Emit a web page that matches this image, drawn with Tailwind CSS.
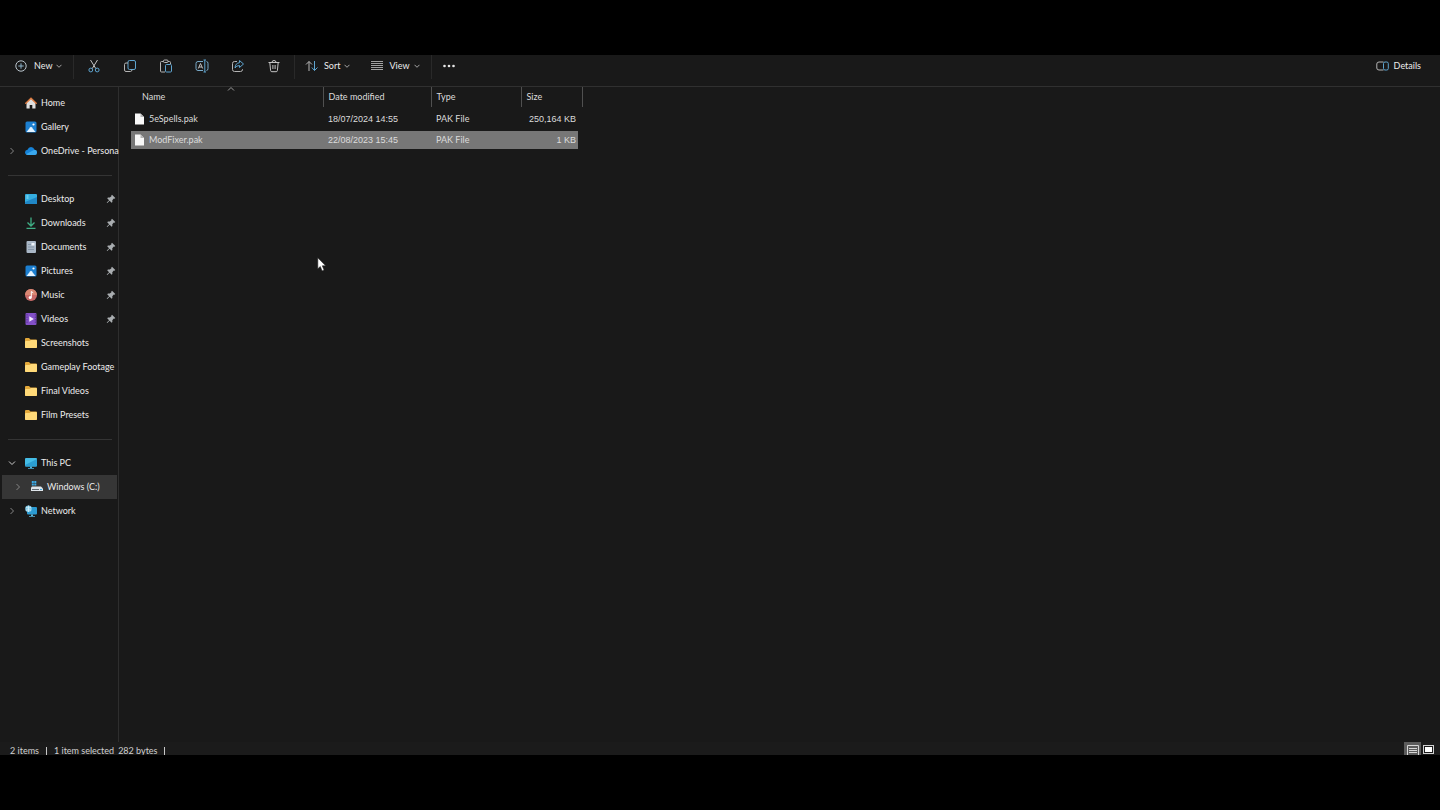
<!DOCTYPE html>
<html lang="en">
<head>
<meta charset="utf-8">
<meta name="viewport" content="width=device-width, initial-scale=1">
<title>File Explorer</title>
<script src="https://cdn.jsdelivr.net/npm/@tailwindcss/browser@4"></script>
</head>
<body class="relative flex h-screen flex-col overflow-hidden bg-black py-[55px] font-[Lato,'Open_Sans',sans-serif] text-[9px] leading-3 text-[#ececec]">

<svg class="hidden">
  <symbol id="down" viewBox="0 0 6 6"><path d="M.5 1.800l2.500 2.500 2.500-2.500" fill="none" stroke="#a5a5a5"/></symbol>
  <symbol id="right" viewBox="0 0 6 8"><path d="M1.500 1l3 3-3 3" fill="none" stroke="#858585"/></symbol>
  <symbol id="pin" viewBox="0 0 10 10"><path d="M6 .8L9.300 4l-.8.700-.7-.1-1.500 1.600.1 1.700-.8.800-2-2L1.300 9l-.6-.5 2.400-2.300-1.900-1.900.8-.8 1.800.1L5.400 2.200l-.1-.7z" fill="#a9adb0"/></symbol>
  <symbol id="folder" viewBox="0 0 12 10"><path d="M0 1q0-1 1-1h3l1.500 1.500H11q1 0 1 1V9q0 1-1 1H1q-1 0-1-1z" fill="#e3a83a"/><path d="M0 4q0-1 1-1h3.500L6 2h5q1 0 1 1v6q0 1-1 1H1q-1 0-1-1z" fill="#ffd978"/></symbol>
  <symbol id="picture" viewBox="0 0 12 12"><rect x=".5" y=".5" width="11" height="11" rx="1.500" fill="#1c7fd0"/><path d="M1.500 11l3.800-4.800q.7-.7 1.400 0l3.800 4.800z" fill="#e2f3ff"/><circle cx="8.500" cy="3.500" r="1.100" fill="#fff"/></symbol>
  <symbol id="file" viewBox="0 0 9 12"><path d="M0 .5h5.500L9 4v7.500H0z" fill="#f8f8f8"/><path d="M5.500.5V4H9z" fill="#b5b5b5"/></symbol>
</svg>

<div class="flex min-h-0 flex-1 flex-col overflow-hidden bg-[#191919]">
  <header class="flex shrink-0 items-start justify-between border-b border-[#303030] pr-[19px] pl-[15px]">
    <div class="flex h-[31px] items-start" role="toolbar" aria-label="Commands">
      <button class="flex h-[22px] w-[58px] items-center">
        <svg class="size-3" viewBox="0 0 12 12" fill="none"><circle cx="6" cy="6" r="5.200" stroke="#b9c4cc"/><path d="M6 3.300v5.400M3.300 6h5.400" stroke="#8fb5cc"/></svg>
        <span class="ml-[7px]">New</span><svg class="ml-[3px] size-1.5"><use href="#down"/></svg>
      </button>
      <span class="h-6 w-px bg-[#292929]"></span>
      <button aria-label="Cut" class="ml-[13px] flex h-[22px] w-3.5 items-center justify-center"><svg class="size-3.5" viewBox="0 0 14 14" fill="none"><path d="M3.500 1l5.300 8.600M10.500 1L5.200 9.600" stroke="#c4c4c4"/><circle cx="3.800" cy="11" r="1.900" stroke="#5ea4cf"/><circle cx="10.200" cy="11" r="1.900" stroke="#5ea4cf"/></svg></button>
      <button aria-label="Copy" class="ml-[22px] flex h-[22px] w-3.5 items-center justify-center"><svg class="size-3.5" viewBox="0 0 14 14" fill="none"><rect x="5" y="1.500" width="7.500" height="9" rx="1.500" stroke="#5ea4cf"/><path d="M5 4H3Q1.500 4 1.500 5.500v5.500q0 1.500 1.500 1.500h4.500q1.500 0 1.500-2" stroke="#b4b4b4"/></svg></button>
      <button aria-label="Paste" class="ml-[22px] flex h-[22px] w-3.5 items-center justify-center"><svg class="size-3.5" viewBox="0 0 14 14" fill="none"><path d="M4.500 2.500H2.500q-1 0-1 1v8.500q0 1 1 1H6M9 2.500h1.500q1 0 1 1V5" stroke="#b4b4b4"/><rect x="4.500" y="1" width="4.500" height="2.500" rx="1" stroke="#b4b4b4"/><rect x="6.500" y="5.500" width="6" height="7.500" rx="1" stroke="#5ea4cf"/></svg></button>
      <button aria-label="Rename" class="ml-[22px] flex h-[22px] w-3.5 items-center justify-center"><svg class="size-3.5" viewBox="0 0 14 14" fill="none"><path d="M8 2.500H3Q1 2.500 1 4.500v5q0 2 2 2h5M11.500 2.500q1.500 0 1.500 2v5q0 2-1.500 2" stroke="#78a9c8"/><path d="M3.300 9.500L5.500 4.500l2.200 5M4 8h3" stroke="#c0c0c0"/><path d="M9.800 1v12M8.500 1H11M8.500 13H11" stroke="#5ea4cf"/></svg></button>
      <button aria-label="Share" class="ml-[22px] flex h-[22px] w-3.5 items-center justify-center"><svg class="size-3.5" viewBox="0 0 14 14" fill="none"><path d="M6 2.500H3.500q-2 0-2 2v6q0 2 2 2h6q2 0 2-2V10" stroke="#b4b4b4"/><path d="M8.500 1.500l4 3.500-4 3.500V6.500Q5.500 6.500 4 9q.3-4.800 4.500-5.300z" stroke="#5ea4cf" stroke-linejoin="round"/></svg></button>
      <button aria-label="Delete" class="ml-[22px] flex h-[22px] w-3.5 items-center justify-center"><svg class="size-3.5" viewBox="0 0 14 14" fill="none" stroke="#c4c4c4"><path d="M1.500 3.500h11M5 3.300Q5 1.500 7 1.500t2 1.800M2.800 3.500l.8 8q.1 1.200 1.200 1.200h4.400q1.100 0 1.200-1.200l.8-8M5.900 6v4M8.100 6v4"/></svg></button>
      <span class="ml-[13px] h-6 w-px bg-[#292929]"></span>
      <button class="ml-[10px] flex h-[22px] items-center">
        <svg class="h-3 w-3.5" viewBox="0 0 14 12" fill="none"><path d="M4 11V1.500M1 4.500l3-3 3 3" stroke="#b8b8b8"/><path d="M9.500 1v9.500M6.800 7.500l2.700 3 3-3" stroke="#5ea4cf"/></svg>
        <span class="ml-[5px]">Sort</span><svg class="ml-1 size-1.5"><use href="#down"/></svg>
      </button>
      <button class="ml-[21px] flex h-[22px] items-center">
        <svg class="h-3 w-3" viewBox="0 0 12 12"><path d="M0 1.500h12M0 3.500h12M0 5.500h12M0 7.500h12M0 9.500h12" stroke="#a2a2a2"/></svg>
        <span class="ml-[6px]">View</span><svg class="ml-1 size-1.5"><use href="#down"/></svg>
      </button>
      <span class="ml-[11px] h-6 w-px bg-[#292929]"></span>
      <button aria-label="See more" class="ml-[11px] flex h-[22px] items-center"><svg class="h-1 w-3" viewBox="0 0 12 4" fill="#e8e8e8"><circle cx="1.500" cy="2" r="1.300"/><circle cx="6" cy="2" r="1.300"/><circle cx="10.500" cy="2" r="1.300"/></svg></button>
    </div>
    <button class="flex h-[22px] items-center gap-[5px]"><svg class="h-3 w-[13px]" viewBox="0 0 13 12" fill="none"><path d="M7.500 2H3Q.8 2 .8 4v4q0 2 2.200 2h4.500" stroke="#b4b4b4"/><rect x="7.500" y="2" width="4.800" height="8" rx="1.500" stroke="#5ea4cf"/></svg><span>Details</span></button>
  </header>

  <div class="flex min-h-0 flex-1">
    <nav aria-label="Folders" class="w-[119px] shrink-0 border-r border-[#2e2e2e] pt-1 whitespace-nowrap">
      <ul>
        <li><a href="#home" class="flex h-6 items-center pl-[25px]"><svg class="size-3 shrink-0" viewBox="0 0 12 12"><path d="M1.500 5.500L6 1.500l4.500 4V11.500H7.300V8H4.700v3.500H1.500z" fill="#dfdfdf"/><path d="M.8 6.200L6 1.300l5.200 4.900" fill="none" stroke="#dc7a3f" stroke-width="1.500" stroke-linecap="round"/></svg><span class="ml-1">Home</span></a></li>
        <li><a href="#gallery" class="flex h-6 items-center pl-[25px]"><svg class="size-3 shrink-0"><use href="#picture"/></svg><span class="ml-1">Gallery</span></a></li>
        <li><a href="#onedrive" class="flex h-6 items-center pl-[9px]"><svg class="h-2 w-1.5 shrink-0"><use href="#right"/></svg><svg class="ml-[10px] size-3 shrink-0" viewBox="0 0 12 12"><path d="M3 10q-3-.2-3-2.700Q.1 5 2.500 4.700 3.500 2 6 2q2.700 0 3.500 2.700Q12 5 12 7.500 11.900 10 9.500 10z" fill="#1683d8"/><path d="M1 9.300l5-2.800 3.500-1.800Q12 5 12 7.500 11.900 10 9.500 10H3q-1.200 0-2-.7z" fill="#3aa8ee"/></svg><span class="ml-1">OneDrive - Persona</span></a></li>
      </ul>
      <div class="flex h-6 items-center pr-[6px] pl-2"><hr class="w-full border-[#343434]"></div>
      <ul>
        <li><a href="#desktop" class="flex h-6 items-center pr-[2px] pl-[25px]"><svg class="size-3 shrink-0" viewBox="0 0 12 12"><rect y="1" width="12" height="10" rx="1" fill="#35aee0"/><path d="M0 9L12 4v6q0 1-1 1H1q-1 0-1-1z" fill="#2087c6"/><path d="M1.500 3h2M1.500 5h2" stroke="#9ae8f8"/></svg><span class="ml-1 flex-1">Desktop</span><svg class="size-2.5 shrink-0"><use href="#pin"/></svg></a></li>
        <li><a href="#downloads" class="flex h-6 items-center pr-[2px] pl-[25px]"><svg class="size-3 shrink-0" viewBox="0 0 12 12" fill="none" stroke="#3fae85" stroke-width="1.300"><path d="M6 .5v8M2.500 5.500L6 9l3.500-3.500M1.500 11.300h9"/></svg><span class="ml-1 flex-1">Downloads</span><svg class="size-2.5 shrink-0"><use href="#pin"/></svg></a></li>
        <li><a href="#documents" class="flex h-6 items-center pr-[2px] pl-[25px]"><svg class="size-3 shrink-0" viewBox="0 0 12 12"><rect x="1.500" width="9.500" height="12" rx="1" fill="#a9b7c6"/><path d="M3 3.500h3M3 6h6M3 8.500h6" stroke="#8496a8"/><rect x="6.500" y="2" width="3" height="2.500" fill="#eef4fa"/></svg><span class="ml-1 flex-1">Documents</span><svg class="size-2.5 shrink-0"><use href="#pin"/></svg></a></li>
        <li><a href="#pictures" class="flex h-6 items-center pr-[2px] pl-[25px]"><svg class="size-3 shrink-0"><use href="#picture"/></svg><span class="ml-1 flex-1">Pictures</span><svg class="size-2.5 shrink-0"><use href="#pin"/></svg></a></li>
        <li><a href="#music" class="flex h-6 items-center pr-[2px] pl-[25px]"><svg class="size-3 shrink-0" viewBox="0 0 12 12"><circle cx="6" cy="6" r="6" fill="#c96a68"/><path d="M0 6a6 6 0 0 1 12 0z" fill="#d98772"/><path d="M6.300 8.500V2.500l2 1.300" fill="none" stroke="#fff"/><circle cx="5.200" cy="8.500" r="1.500" fill="#fff"/></svg><span class="ml-1 flex-1">Music</span><svg class="size-2.5 shrink-0"><use href="#pin"/></svg></a></li>
        <li><a href="#videos" class="flex h-6 items-center pr-[2px] pl-[25px]"><svg class="size-3 shrink-0" viewBox="0 0 12 12"><rect x=".5" width="11" height="12" rx="1" fill="#8350c8"/><path d="M2 1v10M10.300 1v10" stroke="#5b3295" stroke-dasharray="1.500 1"/><path d="M4.300 3.300v5.400L8.800 6z" fill="#f3eaff"/></svg><span class="ml-1 flex-1">Videos</span><svg class="size-2.5 shrink-0"><use href="#pin"/></svg></a></li>
        <li><a href="#screenshots" class="flex h-6 items-center pl-[25px]"><svg class="h-2.5 w-3 shrink-0"><use href="#folder"/></svg><span class="ml-1">Screenshots</span></a></li>
        <li><a href="#gameplay" class="flex h-6 items-center pl-[25px]"><svg class="h-2.5 w-3 shrink-0"><use href="#folder"/></svg><span class="ml-1">Gameplay Footage</span></a></li>
        <li><a href="#final" class="flex h-6 items-center pl-[25px]"><svg class="h-2.5 w-3 shrink-0"><use href="#folder"/></svg><span class="ml-1">Final Videos</span></a></li>
        <li><a href="#film" class="flex h-6 items-center pl-[25px]"><svg class="h-2.5 w-3 shrink-0"><use href="#folder"/></svg><span class="ml-1">Film Presets</span></a></li>
      </ul>
      <div class="flex h-6 items-center pr-[6px] pl-2"><hr class="w-full border-[#343434]"></div>
      <ul>
        <li><a href="#pc" class="flex h-6 items-center pl-[9px]"><svg class="h-2 w-1.5 shrink-0 overflow-visible" viewBox="0 0 6 8"><path d="M0 2.500l3 3 3-3" fill="none" stroke="#ccc"/></svg><svg class="ml-[10px] size-3 shrink-0" viewBox="0 0 12 12"><rect y="1" width="12" height="8.500" rx="1" fill="#45bde6"/><path d="M0 8L12 2v6.500q0 1-1 1H1q-1 0-1-1z" fill="#2c9fd2"/><path d="M5 9.500h2V11H5zM3 11h6v.8H3z" fill="#4fb2dc"/></svg><span class="ml-1">This PC</span></a></li>
        <li><a href="#c" aria-current="page" class="mr-px ml-0.5 flex h-6 items-center bg-[#363636] pl-[13px]"><svg class="h-2 w-1.5 shrink-0"><use href="#right"/></svg><svg class="ml-[10px] size-3 shrink-0" viewBox="0 0 12 12"><path d="M.8 0h2v2h-2zM3.300 0h2v2h-2zM.8 2.500h2v2h-2zM3.300 2.500h2v2h-2z" fill="#39abe8"/><path d="M1 5.500h9l2 2v2.500H0V6.500z" fill="#dfe5ea"/><path d="M1 8.500h7" stroke="#626b73"/><path d="M9 8.500h2" stroke="#39abe8"/></svg><span class="ml-1">Windows (C:)</span></a></li>
        <li><a href="#network" class="flex h-6 items-center pl-[9px]"><svg class="h-2 w-1.5 shrink-0"><use href="#right"/></svg><svg class="ml-[10px] size-3 shrink-0" viewBox="0 0 12 12"><rect x="2" y="2" width="10" height="7.500" rx="1" fill="#2c9bd2"/><path d="M6 9.500h2V11H6zM4 11h6v.8H4z" fill="#59b6dc"/><circle cx="3.500" cy="3.800" r="3.300" fill="#7fc8e6"/><path d="M1 2.500q2.500 1 5 0M1 5.200q2.500-1 5 0M3.500.5v6.500" fill="none" stroke="#e0f5fd" stroke-width=".7"/></svg><span class="ml-1">Network</span></a></li>
      </ul>
    </nav>

    <main class="min-w-0 flex-1 pl-3">
      <table class="w-[451px] table-fixed border-collapse text-left whitespace-nowrap text-[#dcdcdc]">
        <colgroup><col class="w-[192px]"><col class="w-[108px]"><col class="w-[90px]"><col class="w-[57px]"><col class="w-[4px]"></colgroup>
        <thead>
          <tr class="h-5 align-middle">
            <th scope="col" aria-sort="ascending" class="relative border-r border-[#505050] p-0 pl-[11px] font-normal">Name<svg class="absolute top-0 left-24 h-1 w-2" viewBox="0 0 8 4"><path d="M1 3.500l3-3 3 3" fill="none" stroke="#9a9a9a"/></svg></th>
            <th scope="col" class="border-r border-[#505050] p-0 pl-[5px] font-normal">Date modified</th>
            <th scope="col" class="border-r border-[#505050] p-0 pl-[5px] font-normal">Type</th>
            <th scope="col" colspan="2" class="border-r border-[#505050] p-0 pl-[5px] font-normal">Size</th>
          </tr>
        </thead>
        <tbody>
          <tr class="h-6">
            <td class="p-0 pl-1"><div class="flex items-center gap-[5px]"><svg class="h-3 w-[9px]"><use href="#file"/></svg>5eSpells.pak</div></td>
            <td class="p-0 pl-[5px] font-['Liberation_Sans',sans-serif]">18/07/2024 14:55</td><td class="p-0 pl-[5px]">PAK File</td><td class="p-0 pr-0.5 text-right font-['Liberation_Sans',sans-serif]">250,164 KB</td>
          </tr>
          <tr class="h-[18px]" aria-selected="true">
            <td class="bg-[#777] p-0 pl-1"><div class="flex items-center gap-[5px]"><svg class="h-3 w-[9px]"><use href="#file"/></svg>ModFixer.pak</div></td>
            <td class="bg-[#777] p-0 pl-[5px] font-['Liberation_Sans',sans-serif]">22/08/2023 15:45</td><td class="bg-[#777] p-0 pl-[5px]">PAK File</td><td class="bg-[#777] p-0 pr-0.5 text-right font-['Liberation_Sans',sans-serif]">1 KB</td>
          </tr>
        </tbody>
      </table>
    </main>
  </div>

  <footer class="flex h-[13px] shrink-0 items-start justify-between bg-[#1b1b1b] pr-1 pl-[10px] text-[#d0d0d0]">
    <div class="flex items-center pt-[3px]"><span>2 items</span><span class="mx-[7px] h-2 w-px bg-[#c8c8c8]"></span><span>1 item selected</span><span class="ml-1">282 bytes</span><span class="ml-[6px] h-2 w-px bg-[#c8c8c8]"></span></div>
    <div class="flex">
      <button aria-label="Details view" class="h-[13px] w-[17px] bg-[#5c5c5c]"><svg class="h-[13px] w-[17px]" viewBox="0 0 17 13"><path d="M3.500 13V3.500h11V13M5 6.500h8M5 8.500h8M5 10.500h8" fill="none" stroke="#d6d6d6"/></svg></button>
      <button aria-label="Large icons view" class="h-[13px] w-[15px]"><svg class="h-[13px] w-[15px]" viewBox="0 0 15 13"><rect x="2.500" y="3.500" width="10" height="8" fill="none" stroke="#d0d0d0"/><rect x="4" y="5" width="7" height="5" fill="#fff"/></svg></button>
    </div>
  </footer>
</div>

<svg class="pointer-events-none absolute top-[257px] left-[317px] h-[15px] w-[10px]" viewBox="0 0 10 15" aria-hidden="true"><path d="M.8.800v11l2.500-2.300 1.800 4.400 2-.9-1.800-4.200h3.400z" fill="#fff" stroke="#222" stroke-width=".6"/></svg>
</body>
</html>
